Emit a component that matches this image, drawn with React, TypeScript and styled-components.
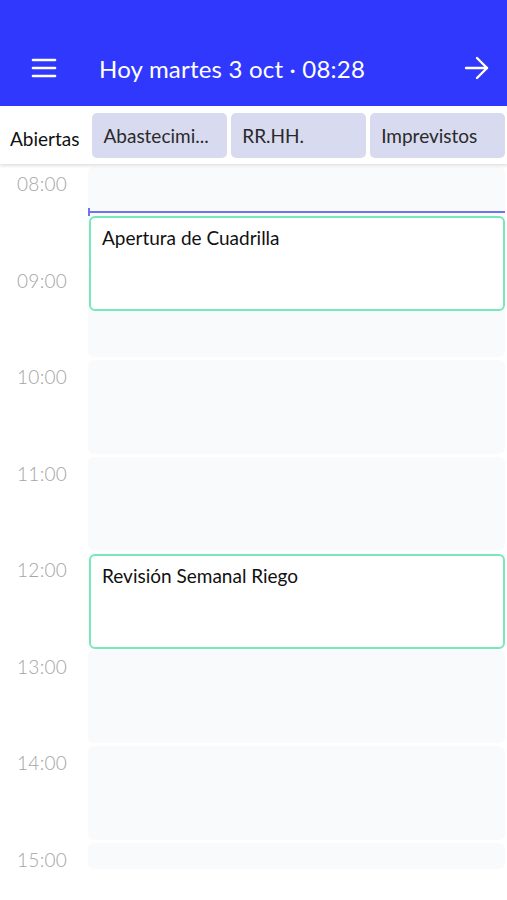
import React from "react";
import styled, { createGlobalStyle } from "styled-components";

const Global = createGlobalStyle`
  html, body { margin: 0; padding: 0; background: #ffffff; }
  body { font-family: "Lato", "Noto Sans", sans-serif; width: 507px; height: 900px; overflow: hidden; }
  * { box-sizing: border-box; }
`;

const Page = styled.div`
  display: flex;
  flex-direction: column;
  width: 507px;
  height: 900px;
  background: #fff;
`;

const Header = styled.header`
  flex-shrink: 0;
  height: 106px;
  background: #3038fd;
  display: flex;
  align-items: flex-end;
  padding: 0 17px 20px 31px;
  color: #fff;
`;

const HeaderRow = styled.div`
  display: flex;
  align-items: center;
  width: 100%;
  height: 36px;
`;

const Title = styled.h1`
  margin: 0 0 0 42px;
  flex: 1;
  font-size: 24px;
  font-weight: 400;
  letter-spacing: 0.2px;
  color: #fff;
`;

const IconBtn = styled.span`
  display: inline-flex;
  width: 26px;
  height: 26px;
  align-items: center;
  justify-content: center;
`;

const TabBar = styled.nav`
  flex-shrink: 0;
  display: flex;
  align-items: center;
  gap: 4px;
  height: 58px;
  padding: 0 2px 0 0;
  background: #fff;
  box-shadow: 0 2px 3px rgba(0, 0, 0, 0.12);
  position: relative;
  z-index: 2;
`;

const PlainTab = styled.span`
  font-size: 19px;
  color: #111;
  padding: 6px 9px 0 10px;
`;

const Tab = styled.span`
  flex: 1;
  height: 45px;
  background: #d8dbef;
  border-radius: 5px;
  display: flex;
  align-items: center;
  padding: 0 11px;
  font-size: 19px;
  color: #2a2a2a;
  white-space: nowrap;
  overflow: hidden;
`;

const Body = styled.div`
  display: flex;
  padding-top: 3px;
  flex-shrink: 0;
`;

const Hours = styled.div`
  width: 88px;
  display: flex;
  flex-direction: column;
`;

const HourLabel = styled.div`
  height: 96.5px;
  font-size: 19px;
  font-weight: 300;
  color: #a5a5a5;
  padding: 5px 0 0 17px;
  letter-spacing: 0.3px;
`;

const Grid = styled.div`
  position: relative;
  width: 417px;
  display: flex;
  flex-direction: column;
`;

const Cell = styled.div<{ $h: number }>`
  height: ${(p) => p.$h}px;
  margin-bottom: 3px;
  background: #f9fafc;
  border-radius: 6px;
`;

const NowLine = styled.div<{ $top: number }>`
  position: absolute;
  left: 0;
  right: 0;
  top: ${(p) => p.$top}px;
  height: 2px;
  background: #6f73f0;
  &::before {
    content: "";
    position: absolute;
    left: 0;
    top: -3px;
    width: 1.5px;
    height: 8px;
    background: #6f73f0;
  }
`;

const Event = styled.div<{ $top: number; $height: number }>`
  position: absolute;
  left: 1px;
  right: 0;
  top: ${(p) => p.$top}px;
  height: ${(p) => p.$height}px;
  background: #fff;
  border: 2px solid #76e8b9;
  border-radius: 6px;
  padding: 8px 11px;
  font-size: 19px;
  color: #111;
`;

const HOUR = 96.5;
const hours = ["08:00", "09:00", "10:00", "11:00", "12:00", "13:00", "14:00", "15:00"];

const events = [
  { title: "Apertura de Cuadrilla", start: 8.5, end: 9.5 },
  { title: "Revisión Semanal Riego", start: 12, end: 13 },
];

export default function App() {
  return (
    <Page>
      <Global />
      <Header>
        <HeaderRow>
          <IconBtn>
            <svg width="26" height="22" viewBox="0 0 26 22">
              <g stroke="#fff" strokeWidth="2.6" strokeLinecap="round">
                <line x1="2" y1="3" x2="24" y2="3" />
                <line x1="2" y1="11" x2="24" y2="11" />
                <line x1="2" y1="19" x2="24" y2="19" />
              </g>
            </svg>
          </IconBtn>
          <Title>Hoy martes 3 oct · 08:28</Title>
          <IconBtn>
            <svg width="26" height="26" viewBox="0 0 26 26">
              <g stroke="#fff" strokeWidth="2.4" strokeLinecap="round" strokeLinejoin="round" fill="none">
                <line x1="2" y1="13" x2="23" y2="13" />
                <polyline points="13,3 23,13 13,23" />
              </g>
            </svg>
          </IconBtn>
        </HeaderRow>
      </Header>
      <TabBar>
        <PlainTab>Abiertas</PlainTab>
        <Tab>Abastecimi...</Tab>
        <Tab>RR.HH.</Tab>
        <Tab>Imprevistos</Tab>
      </TabBar>
      <Body>
        <Hours>
          {hours.map((h) => (
            <HourLabel key={h}>{h}</HourLabel>
          ))}
        </Hours>
        <Grid>
          {hours.map((h, i) => (
            <Cell key={h} $h={i === hours.length - 1 ? 26 : 93.5} />
          ))}
          <NowLine $top={(28 / 60) * HOUR - 1} />
          {events.map((e) => (
            <Event key={e.title} $top={(e.start - 8) * HOUR + 1} $height={(e.end - e.start) * HOUR - 2}>
              {e.title}
            </Event>
          ))}
        </Grid>
      </Body>
    </Page>
  );
}
